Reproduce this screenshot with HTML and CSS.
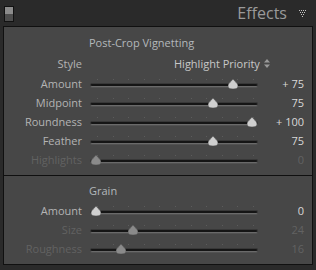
FILE: index.html
```html
<!DOCTYPE html>
<html lang="en">
<head>
    <meta charset="UTF-8">
    <title>Effects</title>
    <link rel="stylesheet" href="styles.css">
</head>
<body>
    <div class="panel-header">
        <div class="switch"></div>
        <div class="panel-title">Effects</div>
        <svg class="collapse" width="7" height="7" viewBox="0 0 7 7">
            <rect x="0" y="0" width="1" height="1"/><rect x="2" y="0" width="1" height="1"/><rect x="4" y="0" width="1" height="1"/><rect x="6" y="0" width="1" height="1"/>
            <rect x="1" y="2" width="1" height="1"/><rect x="3" y="2" width="1" height="1"/><rect x="5" y="2" width="1" height="1"/>
            <rect x="2" y="4" width="1" height="1"/><rect x="4" y="4" width="1" height="1"/>
            <rect x="3" y="6" width="1" height="1"/>
        </svg>
    </div>

    <div class="panel">
        <div class="section vignette">
            <div class="section-title">Post-Crop Vignetting</div>
            <div class="row style-row">
                <span class="label">Style</span>
                <div class="select">
                    Highlight Priority
                    <svg class="updown" width="6" height="9" viewBox="0 0 6 9">
                        <path d="M3 0 L6 3.5 L0 3.5 Z"/>
                        <path d="M3 9 L6 5.5 L0 5.5 Z"/>
                    </svg>
                </div>
            </div>
            <div class="row">
                <span class="label">Amount</span>
                <div class="slider"><div class="track"></div><svg class="thumb" style="--v: 0.875" viewBox="0 0 10 10"><path d="M5 0 C6 2 10 4 10 7 Q10 10 5 10 Q0 10 0 7 C0 4 4 2 5 0 Z"/></svg></div>
                <span class="value">+ 75</span>
            </div>
            <div class="row">
                <span class="label">Midpoint</span>
                <div class="slider"><div class="track"></div><svg class="thumb" style="--v: 0.75" viewBox="0 0 10 10"><path d="M5 0 C6 2 10 4 10 7 Q10 10 5 10 Q0 10 0 7 C0 4 4 2 5 0 Z"/></svg></div>
                <span class="value">75</span>
            </div>
            <div class="row">
                <span class="label">Roundness</span>
                <div class="slider"><div class="track"></div><svg class="thumb" style="--v: 1" viewBox="0 0 10 10"><path d="M5 0 C6 2 10 4 10 7 Q10 10 5 10 Q0 10 0 7 C0 4 4 2 5 0 Z"/></svg></div>
                <span class="value">+ 100</span>
            </div>
            <div class="row">
                <span class="label">Feather</span>
                <div class="slider"><div class="track"></div><svg class="thumb" style="--v: 0.75" viewBox="0 0 10 10"><path d="M5 0 C6 2 10 4 10 7 Q10 10 5 10 Q0 10 0 7 C0 4 4 2 5 0 Z"/></svg></div>
                <span class="value">75</span>
            </div>
            <div class="row disabled">
                <span class="label">Highlights</span>
                <div class="slider"><div class="track"></div><svg class="thumb" style="--v: 0" viewBox="0 0 10 10"><path d="M5 0 C6 2 10 4 10 7 Q10 10 5 10 Q0 10 0 7 C0 4 4 2 5 0 Z"/></svg></div>
                <span class="value">0</span>
            </div>
        </div>

        <div class="section grain">
            <div class="section-title">Grain</div>
            <div class="row">
                <span class="label">Amount</span>
                <div class="slider"><div class="track"></div><svg class="thumb" style="--v: 0" viewBox="0 0 10 10"><path d="M5 0 C6 2 10 4 10 7 Q10 10 5 10 Q0 10 0 7 C0 4 4 2 5 0 Z"/></svg></div>
                <span class="value">0</span>
            </div>
            <div class="row disabled">
                <span class="label">Size</span>
                <div class="slider"><div class="track"></div><svg class="thumb" style="--v: 0.24" viewBox="0 0 10 10"><path d="M5 0 C6 2 10 4 10 7 Q10 10 5 10 Q0 10 0 7 C0 4 4 2 5 0 Z"/></svg></div>
                <span class="value">24</span>
            </div>
            <div class="row disabled">
                <span class="label">Roughness</span>
                <div class="slider"><div class="track"></div><svg class="thumb" style="--v: 0.16" viewBox="0 0 10 10"><path d="M5 0 C6 2 10 4 10 7 Q10 10 5 10 Q0 10 0 7 C0 4 4 2 5 0 Z"/></svg></div>
                <span class="value">16</span>
            </div>
        </div>
    </div>
</body>
</html>
```

FILE: styles.css
```css
* {
    margin: 0;
    padding: 0;
    box-sizing: border-box;
}

body {
    font-family: "Open Sans", "Noto Sans", sans-serif;
    font-size: 11px;
    background-color: #2a2a2a;
    color: #b4b4b4;
    width: 316px;
    height: 270px;
    overflow: hidden;
}

.panel-header {
    height: 26px;
    display: flex;
    align-items: center;
    padding: 0 10px 0 4px;
}

.switch {
    width: 10px;
    height: 16px;
    margin-top: 1px;
    border: 1px solid #121212;
    background: linear-gradient(#8c8c8c 0, #8c8c8c 50%, #4e4e4e 50%, #4e4e4e 100%);
}

.panel-title {
    flex: 1;
    text-align: right;
    font-size: 16px;
    color: #9a9a9a;
    padding-right: 12px;
    line-height: 20px;
}

.collapse {
    fill: #c4c4c4;
    margin-top: 1px;
}

.panel {
    margin: 0 3px;
    border: 1px solid #101010;
    background-color: #474747;
}

.section {
    display: flex;
    flex-direction: column;
}

.section.vignette {
    padding: 8px 0 6px;
    border-bottom: 1px solid #101010;
}

.section.grain {
    padding: 7px 0 6px;
}

.section-title {
    padding-left: 85px;
    line-height: 16px;
    color: #b3b8bb;
    margin-bottom: 2px;
}

.row {
    display: grid;
    grid-template-columns: 78px 168px 38px;
    column-gap: 8px;
    height: 19px;
    align-items: center;
}

.row.style-row {
    height: 18px;
    margin: 1px 0 2px;
}

.label {
    text-align: right;
}

.value {
    text-align: right;
    color: #d8d8d8;
    grid-column: 3;
    margin-left: -8px;
}

.select {
    grid-column: 2 / 4;
    padding-left: 84px;
    color: #c8c8c8;
    display: flex;
    align-items: center;
    gap: 4px;
}

.updown {
    fill: #9a9a9a;
}

.slider {
    position: relative;
    height: 19px;
}

.slider::before {
    content: "";
    position: absolute;
    left: 7px;
    top: 5px;
    width: 157px;
    height: 1px;
    background: repeating-linear-gradient(to right, #5c5c5c 0, #5c5c5c 1px, transparent 1px, transparent 15.6px);
}

.track {
    position: absolute;
    left: 0;
    right: 0;
    top: 9px;
    height: 4px;
    border-radius: 2px;
    background-color: #151515;
    border: 1px solid #383838;
    border-bottom-color: #6a6a6a;
    box-shadow: 0 1px 0 #525252;
}

.thumb {
    position: absolute;
    top: 5px;
    left: calc(var(--v) * 156px + 1px);
    width: 10px;
    height: 10px;
    fill: #cfcfcf;
    stroke: #5a5a5a;
    stroke-width: 0.6;
}

.row.disabled .label,
.row.disabled .value {
    color: #626262;
}

.row.disabled .thumb {
    fill: #8a8a8a;
}
```
